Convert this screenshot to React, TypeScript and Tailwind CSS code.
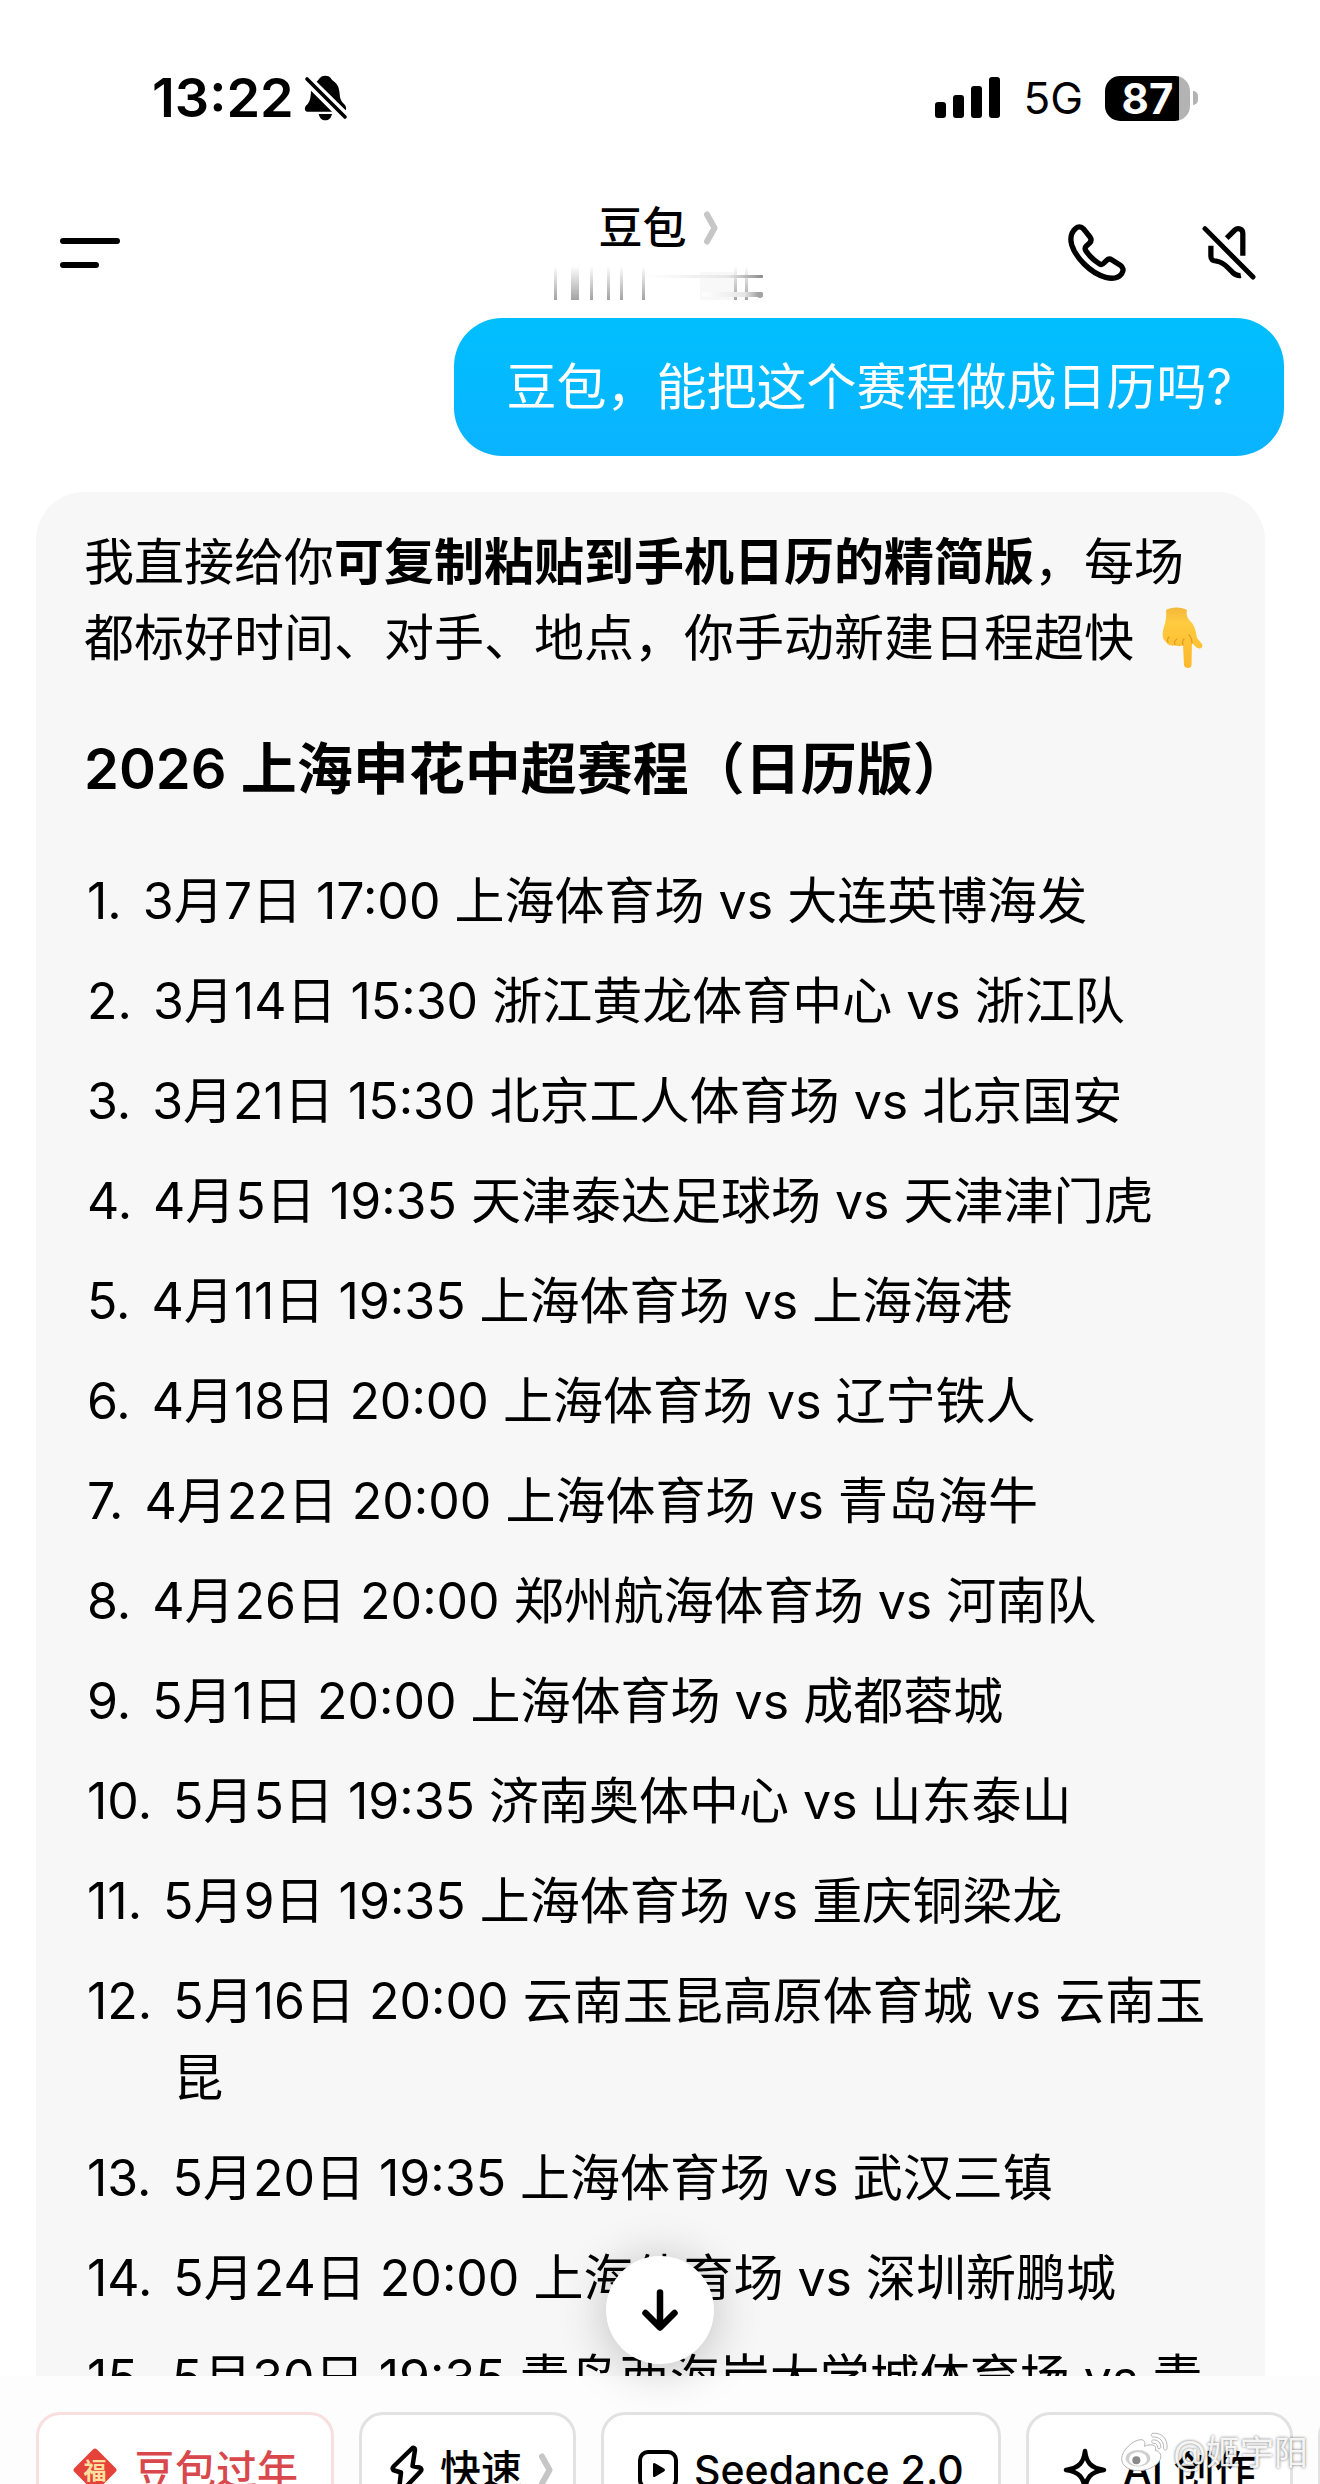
import React from "react";

type Match = {
	date: string;
	time: string;
	venue: string;
	opponent: string;
};

const matches: Match[] = [
	{ date: "3月7日", time: "17:00", venue: "上海体育场", opponent: "大连英博海发" },
	{ date: "3月14日", time: "15:30", venue: "浙江黄龙体育中心", opponent: "浙江队" },
	{ date: "3月21日", time: "15:30", venue: "北京工人体育场", opponent: "北京国安" },
	{ date: "4月5日", time: "19:35", venue: "天津泰达足球场", opponent: "天津津门虎" },
	{ date: "4月11日", time: "19:35", venue: "上海体育场", opponent: "上海海港" },
	{ date: "4月18日", time: "20:00", venue: "上海体育场", opponent: "辽宁铁人" },
	{ date: "4月22日", time: "20:00", venue: "上海体育场", opponent: "青岛海牛" },
	{ date: "4月26日", time: "20:00", venue: "郑州航海体育场", opponent: "河南队" },
	{ date: "5月1日", time: "20:00", venue: "上海体育场", opponent: "成都蓉城" },
	{ date: "5月5日", time: "19:35", venue: "济南奥体中心", opponent: "山东泰山" },
	{ date: "5月9日", time: "19:35", venue: "上海体育场", opponent: "重庆铜梁龙" },
	{ date: "5月16日", time: "20:00", venue: "云南玉昆高原体育城", opponent: "云南玉昆" },
	{ date: "5月20日", time: "19:35", venue: "上海体育场", opponent: "武汉三镇" },
	{ date: "5月24日", time: "20:00", venue: "上海体育场", opponent: "深圳新鹏城" },
	{ date: "5月30日", time: "19:35", venue: "青岛西海岸大学城体育场", opponent: "青岛西海岸" },
];

const BellOffIcon = () => (
	<svg width="44" height="48" viewBox="912 102 132 144" aria-hidden="true">
		<path
			d="M950 125 C958 118 960 107 976 107 C992 107 993 118 1001 124 C1014 133 1018 147 1019 162 C1020 178 1024 184 1033 193 C1038 199 1040 204 1037 211 Z"
			fill="#000"
		/>
		<path
			d="M933 152 L996 215 L922 215 C914 215 912 203 919 196 C929 186 932 178 933 152 Z"
			fill="#000"
		/>
		<path d="M956 222 H996 C993 235 986 241 976 241 C966 241 959 235 956 222 Z" fill="#000" />
		<path d="M921 117 L1035 231" stroke="#000" strokeWidth="11" strokeLinecap="round" />
	</svg>
);

const SignalIcon = () => (
	<svg width="66" height="42" viewBox="0 0 66 42" aria-hidden="true">
		<rect x="0" y="25" width="11" height="16" rx="3" />
		<rect x="18" y="18" width="11" height="23" rx="3" />
		<rect x="36" y="9" width="11" height="32" rx="3" />
		<rect x="54" y="0" width="11" height="41" rx="3" />
	</svg>
);

const MenuIcon = () => (
	<svg width="60" height="30" viewBox="0 0 60 30" aria-hidden="true">
		<path d="M3 3H57M3 27H36" stroke="#000" strokeWidth="6" strokeLinecap="round" />
	</svg>
);

const PhoneIcon = () => (
	<svg width="60" height="60" viewBox="564 550 180 180" fill="none" aria-hidden="true">
		<path
			d="M589 567 C597 560 607 560 613 567 L633 592 C638 599 637 605 631 611 L622 619 C617 624 617 628 621 634 C632 650 646 663 661 672 C667 676 671 675 676 669 L683 662 C688 657 693 657 699 661 L724 677 C733 683 735 692 728 702 C717 717 699 718 680 713 C633 700 589 652 578 615 C573 596 576 579 589 567 Z"
			stroke="#000"
			strokeWidth="16"
			strokeLinejoin="round"
		/>
	</svg>
);

const SpeakerOffIcon = () => (
	<svg width="54" height="56" viewBox="968 556 164 168" fill="none" aria-hidden="true">
		<g stroke="#000" strokeWidth="16">
			<path d="M1043 595 L1067 571 C1077 562 1092 566 1092 581 V648" />
			<path d="M995 618 V650 C995 662 1002 664 1013 665 C1026 667 1036 674 1046 684 L1061 699 C1069 706 1076 710 1086 708" />
			<path d="M977 566 L1123 713" strokeLinecap="round" strokeWidth="15" />
		</g>
	</svg>
);

const Chevron = () => (
	<svg width="15" height="34" viewBox="0 0 15 34" fill="none" aria-hidden="true">
		<path d="M4 3.500L11.500 17L4 30.500" stroke="#c6c6c6" strokeWidth="6" strokeLinecap="round" strokeLinejoin="round" />
	</svg>
);

// smeared subtitle under the assistant name
const SubtitleSmear = () => (
	<svg width="212" height="34" viewBox="0 0 212 34" aria-hidden="true">
		<defs>
			<linearGradient id="bar" x1="0" y1="0" x2="0" y2="1">
				<stop offset="0" stopColor="#fff" />
				<stop offset="1" stopColor="#a3a3a3" />
			</linearGradient>
			<linearGradient id="streak" x1="0" y1="0" x2="1" y2="0">
				<stop offset="0" stopColor="#fff" />
				<stop offset="0.7" stopColor="#e6e6e6" />
				<stop offset="1" stopColor="#8c8c8c" />
			</linearGradient>
		</defs>
		<rect x="148" y="6" width="34" height="28" fill="#f8f8f8" />
		<rect x="2" y="0" width="3" height="34" fill="url(#bar)" />
		<rect x="19" y="0" width="8" height="34" fill="url(#bar)" />
		<rect x="38" y="0" width="3" height="34" fill="url(#bar)" />
		<rect x="55" y="0" width="3" height="34" fill="url(#bar)" />
		<rect x="68" y="0" width="3" height="34" fill="url(#bar)" />
		<rect x="90" y="0" width="3" height="34" fill="url(#bar)" />
		<rect x="182" y="0" width="3" height="34" fill="url(#bar)" />
		<rect x="193" y="0" width="3" height="34" fill="url(#bar)" />
		<rect x="96" y="9" width="115" height="3" rx="1" fill="url(#streak)" />
		<rect x="150" y="26" width="61" height="5" rx="2" fill="url(#streak)" />
		<circle cx="208" cy="29" r="3" fill="#a3a3a3" />
	</svg>
);

const PointDown = () => (
	<svg
		width="42"
		height="62"
		viewBox="0 0 42 62"
		className="mb-2 ml-7 inline-block align-middle"
		role="img"
		aria-label="👇"
	>
		<defs>
			<linearGradient id="skin" x1="0" y1="0" x2="0" y2="1">
				<stop offset="0" stopColor="#f3b73a" />
				<stop offset="0.25" stopColor="#ffcb3f" />
				<stop offset="1" stopColor="#fcb82a" />
			</linearGradient>
		</defs>
		<path
			d="M4 3C9 -0.500 20 -0.500 25 3C24 8 25 11 29 15C33 19 34 25 35 31L40 37C42 41 37 43 34 40L30 36L29.500 58C29.500 62 22.500 62 22 58L21 38C18 40 14 39 13 38C9 40 5 37 4 35C1 33 0 29 1 24C2 18 5 13 4 3Z"
			fill="url(#skin)"
		/>
		<path d="M6 35C5 33 6 31 7 30M13 38C12 35 13 33 15 32M21 38C20 35 21 33 22 32M30 36C30 32 29 30 27 28" stroke="#e39a20" strokeWidth="1.200" fill="none" strokeLinecap="round" />
	</svg>
);

const FortuneIcon = () => (
	<svg width="46" height="46" viewBox="0 0 46 46" aria-hidden="true">
		<rect x="7" y="7" width="32" height="32" rx="3" transform="rotate(45 23 23)" fill="#e5423a" />
		<text x="23" y="32" textAnchor="middle" fontSize="23" fontWeight="700" fill="#ffdf9e">
			福
		</text>
	</svg>
);

const BoltIcon = () => (
	<svg width="34" height="50" viewBox="0 0 34 50" fill="none" aria-hidden="true">
		<path
			d="M22 3.500L3.500 21.500C2 23 2.500 25 4.500 25.500L11 27.500L9 45C9 47 10.500 47.500 12 46L30.500 26.500C32 25 31.500 23 29.500 22.500L22.500 21L25 5C25 3 23.500 2 22 3.500Z"
			stroke="#000"
			strokeWidth="4.500"
			strokeLinejoin="round"
		/>
	</svg>
);

const VideoIcon = () => (
	<svg width="40" height="40" viewBox="0 0 40 40" fill="none" aria-hidden="true">
		<rect x="2" y="2" width="36" height="36" rx="8" stroke="#000" strokeWidth="4" />
		<path d="M15 14.500C15 13 16 12.500 17.500 13.500L26 18.500C27.300 19.500 27.300 20.500 26 21.500L17.500 26.500C16 27.500 15 27 15 25.500Z" fill="#000" />
	</svg>
);

const SparkIcon = () => (
	<svg width="44" height="44" viewBox="0 0 44 44" fill="none" aria-hidden="true">
		<path
			d="M22 3C23.500 14 27 20 41 22C27 24 23.500 30 22 41C20.500 30 17 24 3 22C17 20 20.500 14 22 3Z"
			stroke="#000"
			strokeWidth="4.500"
			strokeLinejoin="round"
		/>
	</svg>
);

const WeiboMark = () => (
	<svg width="50" height="44" viewBox="720 330 150 132" aria-hidden="true">
		<g fill="#fff" stroke="#b5b5b5" strokeWidth="3">
			<path d="M728 413C728 389 762 356 786 356C797 356 800 366 796 376C815 368 834 370 829 388C846 393 848 404 843 416C833 438 801 450 775 449C747 447 728 434 728 413Z" />
			<path d="M821 337C847 334 867 352 864 383C863 389 854 388 854 382C855 360 842 347 822 348C816 347 815 339 821 337Z" />
			<path d="M821 357C836 355 847 366 845 380C843 385 836 384 836 379C836 371 830 366 823 367C817 366 816 359 821 357Z" />
		</g>
		<ellipse cx="777" cy="412" rx="37" ry="25" fill="#cfcfcf" />
		<ellipse cx="777" cy="414" rx="27" ry="20" fill="#fff" />
		<circle cx="772" cy="418" r="12" fill="#8a8a8a" />
	</svg>
);

const chipClass =
	"flex h-[116px] shrink-0 items-center gap-4 whitespace-nowrap rounded-3xl border-[3px] text-[41px] font-medium leading-[60px] bg-white";

const App = () => {
	return (
		<div className="flex h-screen flex-col overflow-hidden bg-white font-[Inter,'Noto_Sans_CJK_SC',sans-serif] text-black">
			{/* Status bar */}
			<div className="flex h-[196px] shrink-0 items-center justify-between pl-[152px] pr-[122px]">
				<div className="flex items-center gap-[10px]">
					<span className="text-[54px] font-semibold leading-[60px]">13:22</span>
					<BellOffIcon />
				</div>
				<div className="flex items-center gap-[22px]">
					<SignalIcon />
					<span className="text-[44px] leading-[60px]">5G</span>
					<div className="flex items-center gap-[3px]">
						<div className="flex h-[45px] w-[85px] items-center justify-center rounded-[15px] bg-linear-to-r from-black from-87% to-[#b3b3b3] to-87% text-[42px] font-bold leading-[45px] text-white">
							87
						</div>
						<div className="h-[14px] w-[5px] rounded-r-full bg-[#b3b3b3]"></div>
					</div>
				</div>
			</div>

			{/* Chat header */}
			<header className="grid h-[114px] shrink-0 grid-cols-[1fr_auto_1fr] items-center pl-[60px] pr-16">
				<button type="button" aria-label="菜单" className="justify-self-start">
					<MenuIcon />
				</button>
				<div className="flex flex-col items-center gap-2 pb-2">
					<button type="button" className="flex items-center gap-4">
						<h1 className="text-[44px] font-medium leading-[60px]">豆包</h1>
						<Chevron />
					</button>
					<SubtitleSmear />
				</div>
				<div className="flex items-center gap-[75px] justify-self-end">
					<button type="button" aria-label="语音通话">
						<PhoneIcon />
					</button>
					<button type="button" aria-label="静音">
						<SpeakerOffIcon />
					</button>
				</div>
			</header>

			{/* Messages */}
			<main className="relative min-h-0 flex-1">
				<div className="flex h-full flex-col gap-9 overflow-hidden pt-2 text-[50px] leading-[76px]">
					<div className="mr-9 shrink-0 self-end rounded-[48px] bg-linear-to-b from-[#00bfff] to-[#0bb3ff] px-[52px] py-[31px] text-white">
						豆包，能把这个赛程做成日历吗?
					</div>

					<article className="ml-9 mr-[55px] shrink-0 rounded-[48px] bg-[#f7f7f7] px-12 pb-12 pt-8">
						<p>
							我直接给你
							<strong className="font-semibold">可复制粘贴到手机日历的精简版</strong>
							，每场都标好时间、对手、地点，你手动新建日程超快
							<PointDown />
						</p>
						<h2 className="mt-[52px] text-[56px] font-semibold leading-[80px]">
							2026 上海申花中超赛程（日历版）
						</h2>
						<ol className="mt-[54px] flex flex-col gap-[23px] pl-[3px] leading-[77px]">
							{matches.map((m, idx) => (
								<li key={m.date} className="flex gap-[21px]">
									<span>{idx + 1}.</span>
									<span>
										{m.date} {m.time} {m.venue} vs {m.opponent}
									</span>
								</li>
							))}
						</ol>
					</article>
				</div>

				<button
					type="button"
					aria-label="回到底部"
					className="absolute bottom-3 left-1/2 z-10 flex size-[108px] -translate-x-1/2 items-center justify-center rounded-full bg-white shadow-[0_4px_50px_rgba(0,0,0,0.24)]"
				>
					<svg width="36" height="42" viewBox="0 0 36 42" fill="none" aria-hidden="true">
						<path d="M18 3.500V38M3.500 24L18 38.500L32.500 24" stroke="#000" strokeWidth="6.500" strokeLinecap="round" strokeLinejoin="round" />
					</svg>
				</button>
			</main>

			{/* Shortcut chips */}
			<footer className="relative flex h-[108px] shrink-0 items-start gap-[25px] overflow-hidden bg-[#fdfdfd] pl-9 pt-9">
				<button type="button" className={`${chipClass} border-[#f9dfdf] px-[33px] text-[#d9484c]`}>
					<FortuneIcon />
					豆包过年
				</button>
				<button type="button" className={`${chipClass} border-[#e2e2e2] pl-7 pr-5`}>
					<BoltIcon />
					快速
					<Chevron />
				</button>
				<button type="button" className={`${chipClass} border-[#e2e2e2] px-[34px]`}>
					<VideoIcon />
					Seedance 2.0
				</button>
				<button type="button" className={`${chipClass} border-[#e2e2e2] px-[34px]`}>
					<SparkIcon />
					AI 创作
				</button>
				<button type="button" aria-label="更多" className={`${chipClass} border-[#e2e2e2] px-[34px]`}></button>

				<div className="absolute right-3 top-[52px] flex items-center gap-1 text-[34px] leading-[50px] text-white/90 [text-shadow:0_0_3px_rgba(0,0,0,0.6)]">
					<WeiboMark />
					@姬宇阳
				</div>
			</footer>
		</div>
	);
};

export default App;
